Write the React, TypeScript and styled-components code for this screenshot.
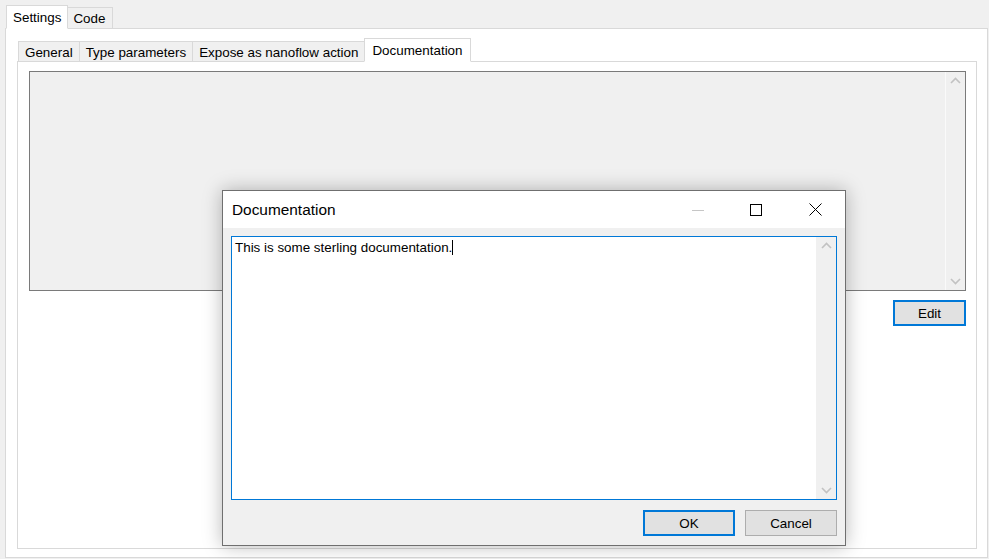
import React from "react";
import styled, { createGlobalStyle } from "styled-components";

const Global = createGlobalStyle`
  html, body { margin: 0; padding: 0; }
  body {
    width: 989px; height: 559px; overflow: hidden;
    background: #f0f0f0;
    font-family: "Liberation Sans", Arial, sans-serif;
    font-size: 13.4px; color: #000;
  }
  #root { width: 989px; height: 559px; }
`;

const Window = styled.div`
  position: relative;
  width: 989px;
  height: 559px;
  display: flex;
  flex-direction: column;
  padding: 0 1px 1px 5px;
  box-sizing: border-box;
`;

const TabStrip = styled.div<{ $indent: number; $height: number }>`
  display: flex;
  align-items: flex-end;
  height: ${(p) => p.$height}px;
  padding-left: ${(p) => p.$indent}px;
  flex: none;
  position: relative;
  z-index: 1;
`;

const Tab = styled.div<{ $active?: boolean; $pl: number; $pr?: number; $h: number }>`
  box-sizing: border-box;
  height: ${(p) => (p.$active ? p.$h + 1 : p.$h)}px;
  margin-bottom: ${(p) => (p.$active ? -1 : 0)}px;
  padding-left: ${(p) => p.$pl}px;
  padding-right: ${(p) => p.$pr ?? p.$pl}px;
  padding-top: ${(p) => (p.$active ? 0 : 1)}px;
  display: flex;
  align-items: center;
  background: ${(p) => (p.$active ? "#fff" : "#f0f0f0")};
  border: 1px solid #d9d9d9;
  border-bottom: ${(p) => (p.$active ? "1px solid #fff" : "none")};
  margin-right: -1px;
  white-space: nowrap;
  z-index: ${(p) => (p.$active ? 2 : 1)};
`;

const Panel = styled.div<{ $pad: string }>`
  flex: 1;
  background: #fff;
  border: 1px solid #d9d9d9;
  box-sizing: border-box;
  display: flex;
  flex-direction: column;
  padding: ${(p) => p.$pad};
`;

const ReadOnlyBox = styled.div`
  height: 220px;
  box-sizing: border-box;
  border: 1px solid #7a7a7a;
  background: #f0f0f0;
  display: flex;
  justify-content: flex-end;
  flex: none;
`;

const ScrollTrack = styled.div<{ $light?: boolean }>`
  width: 20px;
  border-left: 1px solid ${(p) => (p.$light ? "#f0f0f0" : "#fafafa")};
  background: #f0f0f0;
  display: flex;
  flex-direction: column;
  justify-content: space-between;
  align-items: center;
  padding: 5px 0;
  box-sizing: border-box;
`;

const Arrow = styled.svg`
  display: block;
`;

const ButtonRow = styled.div<{ $gap: number; $top?: number }>`
  display: flex;
  justify-content: flex-end;
  gap: ${(p) => p.$gap}px;
  margin-top: ${(p) => p.$top ?? 0}px;
`;

const Button = styled.div<{ $focus?: boolean; $w: number }>`
  box-sizing: border-box;
  width: ${(p) => p.$w}px;
  height: 26px;
  background: #e1e1e1;
  border: ${(p) => (p.$focus ? "2px solid #0078d7" : "1px solid #adadad")};
  display: flex;
  align-items: center;
  justify-content: center;
`;

const Dialog = styled.div`
  position: absolute;
  left: 222px;
  top: 190px;
  width: 624px;
  height: 356px;
  box-sizing: border-box;
  border: 1px solid #6f6f6f;
  background: #f0f0f0;
  box-shadow: 0 0 18px rgba(0, 0, 0, 0.28);
  display: flex;
  flex-direction: column;
  z-index: 5;
`;

const TitleBar = styled.div`
  height: 37px;
  background: #fff;
  display: flex;
  align-items: center;
  padding-left: 9px;
  flex: none;
`;

const Title = styled.div`
  flex: 1;
  font-size: 15.4px;
  padding-top: 1px;
`;

const CaptionButton = styled.div<{ $w: number }>`
  width: ${(p) => p.$w}px;
  height: 37px;
  display: flex;
  align-items: center;
  justify-content: center;
`;

const DialogBody = styled.div`
  flex: 1;
  display: flex;
  flex-direction: column;
  padding: 8px 8px 10px 8px;
  gap: 10px;
`;

const TextArea = styled.div`
  height: 264px;
  box-sizing: border-box;
  border: 1px solid #0078d7;
  background: #fff;
  display: flex;
  flex: none;
`;

const TextContent = styled.div`
  flex: 1;
  padding: 3px 0 0 3px;
`;

const Caret = styled.span`
  display: inline-block;
  width: 1px;
  height: 15px;
  background: #000;
  vertical-align: -3px;
`;

const Up = ({ c = "#c2c2c2" }: { c?: string }) => (
  <Arrow width="11" height="7" viewBox="0 0 11 7">
    <path d="M1 6 L5.5 1.5 L10 6" stroke={c} strokeWidth="1.6" fill="none" />
  </Arrow>
);
const Down = ({ c = "#c2c2c2" }: { c?: string }) => (
  <Arrow width="11" height="7" viewBox="0 0 11 7">
    <path d="M1 1 L5.5 5.5 L10 1" stroke={c} strokeWidth="1.6" fill="none" />
  </Arrow>
);

export default function App() {
  return (
    <>
      <Global />
      <Window>
        <TabStrip $indent={1} $height={28}>
          <Tab $active $h={23} $pl={6}>Settings</Tab>
          <Tab $h={21} $pl={5} $pr={7}>Code</Tab>
        </TabStrip>
        <Panel $pad="0 10px 8px 11px">
          <TabStrip $indent={1} $height={32}>
            <Tab $h={20} $pl={6}>General</Tab>
            <Tab $h={20} $pl={6}>Type parameters</Tab>
            <Tab $h={20} $pl={6}>Expose as nanoflow action</Tab>
            <Tab $active $h={23} $pl={7}>Documentation</Tab>
          </TabStrip>
          <Panel $pad="9px 10px 0 11px">
            <ReadOnlyBox>
              <ScrollTrack>
                <Up />
                <Down />
              </ScrollTrack>
            </ReadOnlyBox>
            <ButtonRow $gap={0} $top={9}>
              <Button $focus $w={73}>Edit</Button>
            </ButtonRow>
          </Panel>
        </Panel>
        <Dialog>
          <TitleBar>
            <Title>Documentation</Title>
            <CaptionButton $w={58}>
              <svg width="12" height="12" viewBox="0 0 12 12">
                <path d="M0 6.5 H12" stroke="#c6c6c6" strokeWidth="1" />
              </svg>
            </CaptionButton>
            <CaptionButton $w={58}>
              <svg width="12" height="12" viewBox="0 0 12 12">
                <rect x="0.5" y="0.5" width="11" height="11" stroke="#000" fill="none" strokeWidth="1" />
              </svg>
            </CaptionButton>
            <CaptionButton $w={60}>
              <svg width="13" height="13" viewBox="0 0 13 13">
                <path d="M0.5 0.5 L12.5 12.5 M12.5 0.5 L0.5 12.5" stroke="#000" strokeWidth="1" />
              </svg>
            </CaptionButton>
          </TitleBar>
          <DialogBody>
            <TextArea>
              <TextContent>
                This is some sterling documentation.<Caret />
              </TextContent>
              <ScrollTrack $light>
                <Up />
                <Down />
              </ScrollTrack>
            </TextArea>
            <ButtonRow $gap={10}>
              <Button $focus $w={92}>OK</Button>
              <Button $w={92}>Cancel</Button>
            </ButtonRow>
          </DialogBody>
        </Dialog>
      </Window>
    </>
  );
}
